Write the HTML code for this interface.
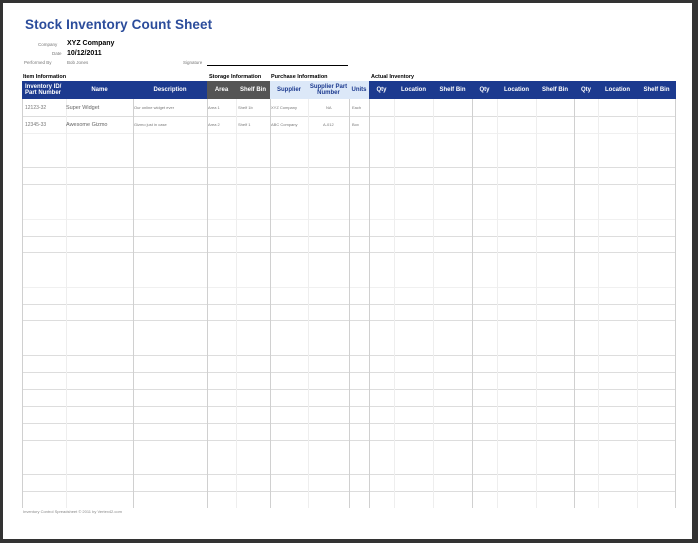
<!DOCTYPE html>
<html><head><style>
*{margin:0;padding:0;box-sizing:border-box}
body{width:698px;height:543px;background:#333;position:relative;overflow:hidden;font-family:"Liberation Sans",sans-serif}
#pg{position:absolute;left:3px;top:3px;width:689px;height:536px;background:#fff}
.a{position:absolute;white-space:nowrap}
.h{position:absolute;top:81px;height:18px;color:#fff;font-size:6px;font-weight:bold;display:flex;align-items:center;justify-content:center;text-align:center;line-height:6px}
.hl{position:absolute;left:22px;width:654px;height:1px;background:#ddd}
.vl{position:absolute;top:99px;height:409px;width:1px;background:#d0d0d0}
.vf{background:#eee}
.s{font-size:4.5px;color:#777}
</style></head><body><div id="pg"></div>
<div class="a" style="left:25px;top:17px;font-size:13.5px;font-weight:bold;color:#2b4c9b;letter-spacing:0.1px">Stock Inventory Count Sheet</div>
<div class="a s" style="left:38px;top:42px">Company</div>
<div class="a" style="left:67px;top:40px;font-size:7px;font-weight:bold">XYZ Company</div>
<div class="a s" style="left:52px;top:51px">Date</div>
<div class="a" style="left:67px;top:50px;font-size:7px;font-weight:bold">10/12/2011</div>
<div class="a s" style="left:24px;top:60px">Performed By</div>
<div class="a s" style="left:67px;top:60px">Bob Jones</div>
<div class="a s" style="left:183px;top:60px">Signature</div>
<div class="a" style="left:207px;top:65px;width:141px;height:1px;background:#000"></div>
<div class="a" style="left:23px;top:74px;font-size:5.5px;font-weight:bold">Item Information</div>
<div class="a" style="left:209px;top:74px;font-size:5.5px;font-weight:bold">Storage Information</div>
<div class="a" style="left:271px;top:74px;font-size:5.5px;font-weight:bold">Purchase Information</div>
<div class="a" style="left:371px;top:74px;font-size:5.5px;font-weight:bold">Actual Inventory</div>
<div class="h" style="left:22px;width:44px;background:#1c3a8f;justify-content:flex-start;padding-left:3px;text-align:left">Inventory ID/<br>Part Number</div>
<div class="h" style="left:66px;width:67px;background:#1c3a8f">Name</div>
<div class="h" style="left:133px;width:74px;background:#1c3a8f">Description</div>
<div class="h" style="left:207px;width:29px;background:#555">Area</div>
<div class="h" style="left:236px;width:34px;background:#555">Shelf Bin</div>
<div class="h" style="left:270px;width:38px;background:#dce8f8;color:#1c3a8f">Supplier</div>
<div class="h" style="left:308px;width:41px;background:#dce8f8;color:#1c3a8f">Supplier Part<br>Number</div>
<div class="h" style="left:349px;width:20px;background:#dce8f8;color:#1c3a8f">Units</div>
<div class="h" style="left:369px;width:25px;background:#1c3a8f">Qty</div>
<div class="h" style="left:394px;width:39px;background:#1c3a8f">Location</div>
<div class="h" style="left:433px;width:39px;background:#1c3a8f">Shelf Bin</div>
<div class="h" style="left:472px;width:25px;background:#1c3a8f">Qty</div>
<div class="h" style="left:497px;width:39px;background:#1c3a8f">Location</div>
<div class="h" style="left:536px;width:38px;background:#1c3a8f">Shelf Bin</div>
<div class="h" style="left:574px;width:24px;background:#1c3a8f">Qty</div>
<div class="h" style="left:598px;width:39px;background:#1c3a8f">Location</div>
<div class="h" style="left:637px;width:39px;background:#1c3a8f">Shelf Bin</div>
<div class="hl" style="top:116px"></div><div class="hl" style="top:133px;background:#f0f0f0"></div>
<div class="hl" style="top:167px"></div><div class="hl" style="top:184px"></div>
<div class="hl" style="top:219px;background:#f0f0f0"></div><div class="hl" style="top:236px"></div>
<div class="hl" style="top:252px"></div><div class="hl" style="top:287px;background:#f0f0f0"></div>
<div class="hl" style="top:304px"></div><div class="hl" style="top:320px"></div>
<div class="hl" style="top:355px"></div><div class="hl" style="top:372px"></div>
<div class="hl" style="top:389px"></div><div class="hl" style="top:406px"></div>
<div class="hl" style="top:423px"></div><div class="hl" style="top:440px"></div>
<div class="hl" style="top:474px"></div><div class="hl" style="top:491px"></div>
<div class="vl" style="left:22px"></div><div class="vl vf" style="left:66px"></div>
<div class="vl" style="left:133px"></div><div class="vl" style="left:207px"></div>
<div class="vl vf" style="left:236px"></div><div class="vl" style="left:270px"></div>
<div class="vl vf" style="left:308px"></div><div class="vl" style="left:349px"></div>
<div class="vl" style="left:369px"></div><div class="vl vf" style="left:394px"></div>
<div class="vl vf" style="left:433px"></div><div class="vl" style="left:472px"></div>
<div class="vl vf" style="left:497px"></div><div class="vl vf" style="left:536px"></div>
<div class="vl" style="left:574px"></div><div class="vl vf" style="left:598px"></div>
<div class="vl vf" style="left:637px"></div><div class="vl" style="left:675px"></div>
<div class="a s" style="left:25px;top:105px;font-size:5px">12123-32</div>
<div class="a s" style="left:66px;top:105px;font-size:5.5px;color:#666">Super Widget</div>
<div class="a s" style="left:134px;top:105px;font-size:4px">Our online widget ever</div>
<div class="a s" style="left:208px;top:105px;font-size:4px">Area 1</div>
<div class="a s" style="left:238px;top:105px;font-size:4px">Shelf 1b</div>
<div class="a s" style="left:271px;top:105px;font-size:4px">XYZ Company</div>
<div class="a s" style="left:326px;top:105px;font-size:4px">NA</div>
<div class="a s" style="left:352px;top:105px;font-size:4px">Each</div>
<div class="a s" style="left:25px;top:122px;font-size:5px">12345-33</div>
<div class="a s" style="left:66px;top:122px;font-size:5.5px;color:#666">Awesome Gizmo</div>
<div class="a s" style="left:134px;top:122px;font-size:4px">Gizmo just in case</div>
<div class="a s" style="left:208px;top:122px;font-size:4px">Area 2</div>
<div class="a s" style="left:238px;top:122px;font-size:4px">Shelf 1</div>
<div class="a s" style="left:271px;top:122px;font-size:4px">ABC Company</div>
<div class="a s" style="left:323px;top:122px;font-size:4px">A-012</div>
<div class="a s" style="left:352px;top:122px;font-size:4px">Box</div>
<div class="a s" style="left:23px;top:509px;font-size:4px;color:#888">Inventory Control Spreadsheet © 2011 by Vertex42.com</div>
</body></html>
